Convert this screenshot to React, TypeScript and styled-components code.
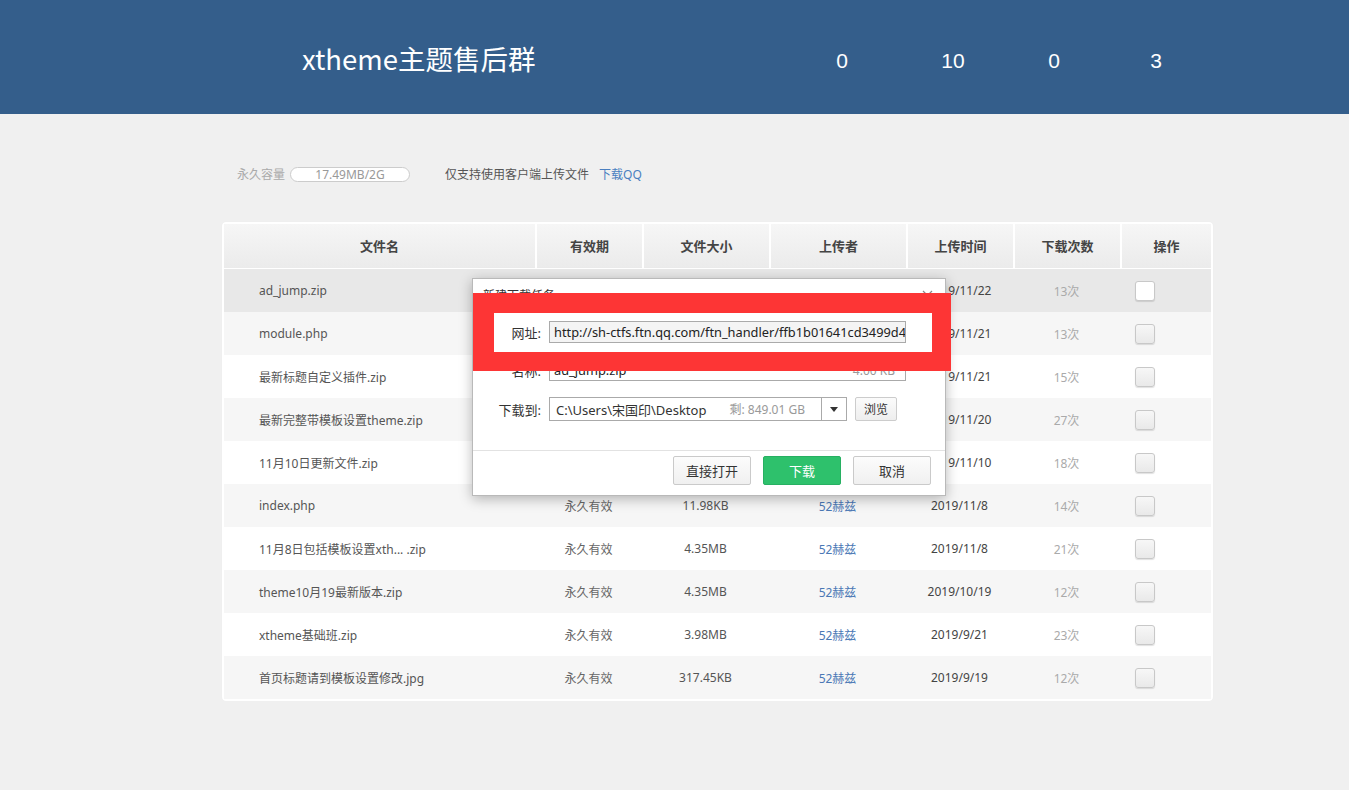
import styled, { createGlobalStyle } from "styled-components";

const GlobalStyle = createGlobalStyle`
  html, body {
    margin: 0;
    padding: 0;
    background: #f0f0f0;
  }
  body {
    font-family: "Noto Sans", "Noto Sans CJK SC", sans-serif;
    color: #555;
  }
`;

const cjk = `"Noto Sans", "Noto Sans CJK SC", sans-serif`;

const Header = styled.div`
  height: 114px;
  background: #345e8b;
  display: flex;
  align-items: center;
  padding-left: 302px;
  box-sizing: border-box;
`;

const GroupTitle = styled.div`
  color: #fff;
  font-family: "Noto Sans CJK SC", sans-serif;
  font-size: 27.5px;
  width: 489px;
  margin-top: 2px;
`;

const Stats = styled.div`
  display: flex;
  margin-top: 8px;
`;

const Stat = styled.div<{ w: number }>`
  width: ${(p) => p.w}px;
  text-align: center;
  color: #fff;
  font-family: "Liberation Sans", Arial, sans-serif;
  font-size: 21px;
`;

const Main = styled.div`
  margin-left: 222px;
  width: 991px;
  padding-top: 52px;
`;

const QuotaRow = styled.div`
  display: flex;
  align-items: center;
  height: 16px;
  padding-left: 15px;
  font-size: 12px;
  font-family: ${cjk};
`;

const QuotaLabel = styled.span`
  color: #aaa;
`;

const QuotaPill = styled.span`
  width: 118px;
  height: 13px;
  border: 1px solid #ccc;
  border-radius: 8px;
  background: #fff;
  color: #999;
  text-align: center;
  line-height: 14px;
  margin-left: 5px;
  font-size: 12px;
`;

const Notice = styled.span`
  color: #555;
  margin-left: 35px;
`;

const QQLink = styled.a`
  color: #4a7fc0;
  margin-left: 10px;
  text-decoration: none;
`;

const TableWrap = styled.div`
  position: relative;
  margin-top: 40px;
  background: #fff;
  border: 2px solid #fff;
  border-radius: 4px;
  box-shadow: 0 0 1px rgba(0, 0, 0, 0.06);
`;

const cols = "311px 107px 127px 137px 107px 107px 91px";

const HeadRow = styled.div`
  display: grid;
  grid-template-columns: ${cols};
  height: 44px;
  border-bottom: 1px solid #fff;
`;

const HeadCell = styled.div`
  display: flex;
  align-items: center;
  justify-content: center;
  background: linear-gradient(#f6f6f6, #ebebeb);
  border-left: 2px solid #fff;
  font-size: 13px;
  font-weight: bold;
  color: #444;
  font-family: "Noto Sans CJK SC", sans-serif;
  padding-bottom: 2px;
  &:first-child {
    border-left: none;
  }
`;

const Row = styled.div<{ bg: string }>`
  display: grid;
  grid-template-columns: ${cols};
  height: 43px;
  background: ${(p) => p.bg};
  font-size: 12px;
  font-family: ${cjk};
`;

const Cell = styled.div<{ color?: string; align?: string }>`
  display: flex;
  align-items: center;
  justify-content: ${(p) => p.align || "center"};
  color: ${(p) => p.color || "#555"};
  padding-left: ${(p) => (p.align ? "35px" : "0")};
`;

const CheckCell = styled.div`
  display: flex;
  align-items: center;
  padding-left: 15px;
`;

const Check = styled.div<{ white?: boolean }>`
  width: 18px;
  height: 18px;
  border: 1px solid #c8c8c8;
  border-radius: 3px;
  background: ${(p) => (p.white ? "#fff" : "linear-gradient(#f7f7f7, #e9e9e9)")};
  box-shadow: 0 1px 1px rgba(0, 0, 0, 0.12);
`;

const Dialog = styled.div`
  position: absolute;
  left: 248px;
  top: 54px;
  width: 472px;
  height: 216px;
  background: #fff;
  border: 1px solid #b9b9b9;
  box-shadow: 0 3px 12px rgba(0, 0, 0, 0.28);
  font-family: ${cjk};
  font-size: 12px;
  color: #333;
  display: flex;
  flex-direction: column;
`;

const DialogTitle = styled.div`
  height: 32px;
  display: flex;
  align-items: center;
  justify-content: space-between;
  padding: 0 12px 0 10px;
  color: #333;
  font-size: 12px;
`;

const DialogBody = styled.div`
  display: flex;
  flex-direction: column;
  gap: 16px;
  padding-top: 10px;
  height: 139px;
  box-sizing: border-box;
`;

const FieldRow = styled.div`
  display: flex;
  align-items: center;
  gap: 8px;
`;

const FieldLabel = styled.div`
  width: 68px;
  text-align: right;
  color: #333;
  font-size: 13px;
`;

const TextBox = styled.div<{ gray?: boolean }>`
  width: 347px;
  height: 20px;
  border: 1px solid #aaa;
  background: ${(p) => (p.gray ? "#f4f4f4" : "#fff")};
  display: flex;
  align-items: center;
  justify-content: space-between;
  padding: 0 4px;
  box-sizing: content-box;
  overflow: hidden;
  white-space: nowrap;
  font-size: 12.8px;
  color: #222;
`;

const Dim = styled.span`
  color: #999;
  font-size: 12px;
  padding-right: 6px;
`;

const Combo = styled.div`
  width: 296px;
  height: 22px;
  border: 1px solid #aaa;
  display: flex;
  align-items: center;
  font-size: 13px;
`;

const ComboText = styled.div`
  flex: 1;
  display: flex;
  justify-content: space-between;
  padding: 0 10px 0 6px;
  color: #333;
`;

const ComboArrow = styled.div`
  width: 24px;
  height: 22px;
  border-left: 1px solid #aaa;
  display: flex;
  align-items: center;
  justify-content: center;
`;

const SmallBtn = styled.div`
  width: 40px;
  height: 22px;
  border: 1px solid #ccc;
  border-radius: 2px;
  background: linear-gradient(#fbfbfb, #eeeeee);
  display: flex;
  align-items: center;
  justify-content: center;
  font-size: 12px;
  color: #333;
`;

const Footer = styled.div`
  border-top: 1px solid #e2e2e2;
  flex: 1;
  display: flex;
  justify-content: flex-end;
  align-items: flex-start;
  gap: 12px;
  padding: 5px 14px 0 0;
`;

const Btn = styled.div<{ primary?: boolean }>`
  width: 76px;
  height: 27px;
  border: 1px solid ${(p) => (p.primary ? "#27b062" : "#cacaca")};
  border-radius: 2px;
  background: ${(p) => (p.primary ? "#2ec16c" : "linear-gradient(#fcfcfc, #f0f0f0)")};
  color: ${(p) => (p.primary ? "#fff" : "#333")};
  display: flex;
  align-items: center;
  justify-content: center;
  font-size: 13px;
`;

const Highlight = styled.div`
  position: absolute;
  left: 0;
  top: 14px;
  width: 478px;
  height: 78px;
  box-sizing: border-box;
  border-style: solid;
  border-color: #fd3535;
  border-width: 20px 19px 19px 21px;
  pointer-events: none;
`;

const files = [
  { name: "ad_jump.zip", size: "4.00KB", date: "2019/11/22", count: "13次" },
  { name: "module.php", size: "4.00KB", date: "2019/11/21", count: "13次" },
  { name: "最新标题自定义插件.zip", size: "4.00KB", date: "2019/11/21", count: "15次" },
  { name: "最新完整带模板设置theme.zip", size: "4.35MB", date: "2019/11/20", count: "27次" },
  { name: "11月10日更新文件.zip", size: "4.35MB", date: "2019/11/10", count: "18次" },
  { name: "index.php", size: "11.98KB", date: "2019/11/8", count: "14次" },
  { name: "11月8日包括模板设置xth... .zip", size: "4.35MB", date: "2019/11/8", count: "21次" },
  { name: "theme10月19最新版本.zip", size: "4.35MB", date: "2019/10/19", count: "12次" },
  { name: "xtheme基础班.zip", size: "3.98MB", date: "2019/9/21", count: "23次" },
  { name: "首页标题请到模板设置修改.jpg", size: "317.45KB", date: "2019/9/19", count: "12次" },
];

const heads = ["文件名", "有效期", "文件大小", "上传者", "上传时间", "下载次数", "操作"];

function App() {
  return (
    <>
      <GlobalStyle />
      <Header>
        <GroupTitle>xtheme主题售后群</GroupTitle>
        <Stats>
          <Stat w={102}>0</Stat>
          <Stat w={120}>10</Stat>
          <Stat w={82}>0</Stat>
          <Stat w={122}>3</Stat>
        </Stats>
      </Header>
      <Main>
        <QuotaRow>
          <QuotaLabel>永久容量</QuotaLabel>
          <QuotaPill>17.49MB/2G</QuotaPill>
          <Notice>仅支持使用客户端上传文件</Notice>
          <QQLink>下载QQ</QQLink>
        </QuotaRow>
        <TableWrap>
          <HeadRow>
            {heads.map((h) => (
              <HeadCell key={h}>{h}</HeadCell>
            ))}
          </HeadRow>
          {files.map((f, i) => (
            <Row key={f.name} bg={i === 0 ? "#e8e8e8" : i % 2 === 1 ? "#f6f6f6" : "#fff"}>
              <Cell align="flex-start">{f.name}</Cell>
              <Cell color="#666">永久有效</Cell>
              <Cell>{f.size}</Cell>
              <Cell color="#4a78b5">52赫兹</Cell>
              <Cell color="#444">{f.date}</Cell>
              <Cell color="#aaa">{f.count}</Cell>
              <CheckCell>
                <Check white={i === 0} />
              </CheckCell>
            </Row>
          ))}
          <Dialog>
            <DialogTitle>
              <span>新建下载任务</span>
              <svg width="11" height="11" viewBox="0 0 11 11">
                <path d="M1 1L10 10M10 1L1 10" stroke="#888" strokeWidth="1.2" />
              </svg>
            </DialogTitle>
            <DialogBody>
              <FieldRow>
                <FieldLabel>网址:</FieldLabel>
                <TextBox gray>http://sh-ctfs.ftn.qq.com/ftn_handler/ffb1b01641cd3499d46</TextBox>
              </FieldRow>
              <FieldRow>
                <FieldLabel>名称:</FieldLabel>
                <TextBox>
                  <span>ad_jump.zip</span>
                  <Dim>4.00 KB</Dim>
                </TextBox>
              </FieldRow>
              <FieldRow>
                <FieldLabel>下载到:</FieldLabel>
                <Combo>
                  <ComboText>
                    <span>C:\Users\宋国印\Desktop</span>
                    <Dim>剩: 849.01 GB</Dim>
                  </ComboText>
                  <ComboArrow>
                    <svg width="8" height="5" viewBox="0 0 8 5">
                      <path d="M0 0H8L4 5Z" fill="#333" />
                    </svg>
                  </ComboArrow>
                </Combo>
                <SmallBtn>浏览</SmallBtn>
              </FieldRow>
            </DialogBody>
            <Footer>
              <Btn>直接打开</Btn>
              <Btn primary>下载</Btn>
              <Btn>取消</Btn>
            </Footer>
            <Highlight />
          </Dialog>
        </TableWrap>
      </Main>
    </>
  );
}

export default App;
